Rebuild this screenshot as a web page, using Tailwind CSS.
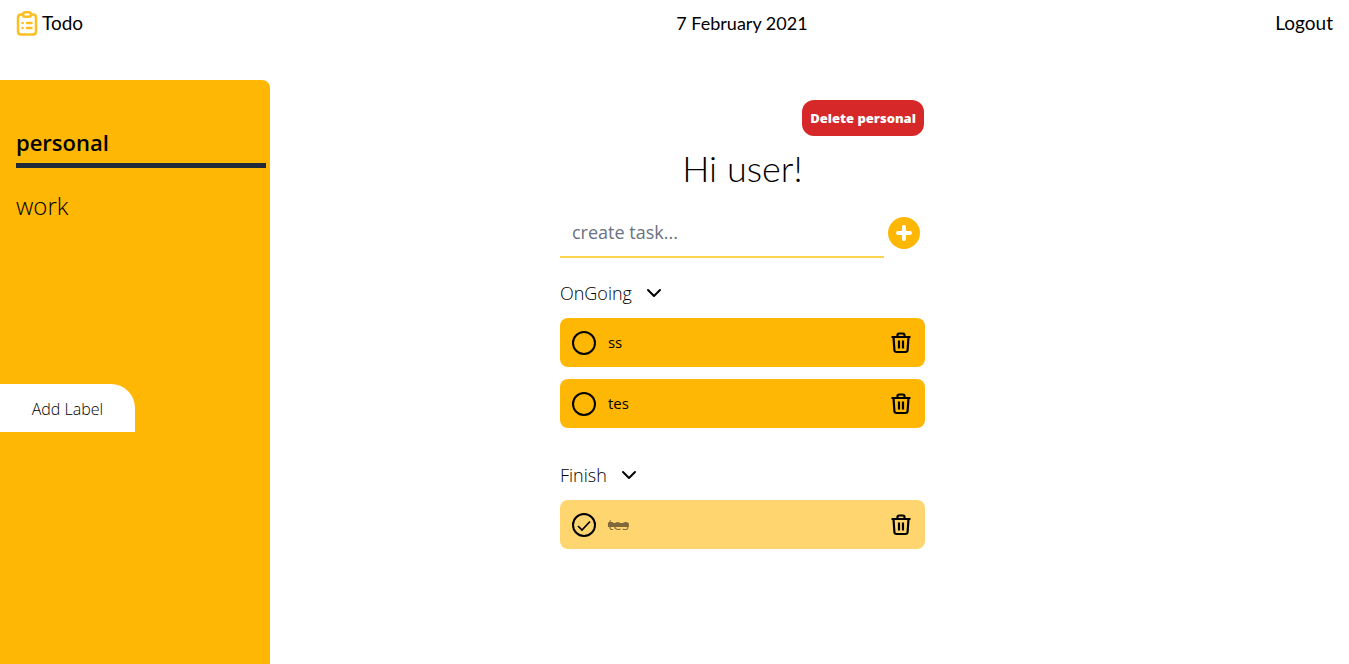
<!DOCTYPE html>
<html lang="en">
<head>
<meta charset="utf-8">
<meta name="viewport" content="width=device-width, initial-scale=1">
<title>Todo</title>
<script src="https://cdn.jsdelivr.net/npm/@tailwindcss/browser@4"></script>
</head>
<body class="flex min-h-screen flex-col bg-white font-['Open_Sans','Noto_Sans',sans-serif] text-black">
<svg class="hidden" aria-hidden="true">
  <symbol id="trash" viewBox="0 0 24 24"><path fill="none" stroke="currentColor" stroke-width="2.200" stroke-linejoin="round" d="M2.500 6h19M4.500 6l.9 13q.1 2 2.100 2h9q2 0 2.100-2L19.500 6M8.500 6V4q0-1.500 1.500-1.500h4q1.500 0 1.500 1.500v2M10 9.500v8M14 9.500v8"/></symbol>
  <symbol id="chevron" viewBox="0 0 16 16"><path fill="none" stroke="currentColor" stroke-width="2" stroke-linecap="round" stroke-linejoin="round" d="M2 5l6 6 6-6"/></symbol>
</svg>
<header class="grid h-12 grid-cols-[20%_70%_10%] items-center pb-0.5 font-['Lato',sans-serif] text-[19px]">
  <a href="#" class="flex items-center gap-1 pl-4">
    <svg class="h-7 w-[22px] text-[#fbbf24]" viewBox="0 0 22 28" fill="none" stroke="currentColor" stroke-width="2.500" stroke-linecap="round" stroke-linejoin="round" aria-hidden="true">
      <path d="M7 5.500H5Q2 5.500 2 8.500v14q0 3 3 3h12q3 0 3-3v-14q0-3-3-3h-2"/><rect x="7" y="3.200" width="8" height="4.600" rx="2.300"/><path d="M6.500 14h.1M6.500 19h.1M11 14h4.500M11 19h4.500"/>
    </svg>
    <span>Todo</span>
  </a>
  <time datetime="2021-02-07" class="text-center text-lg">7 February 2021</time>
  <a href="#" class="pr-4 text-right">Logout</a>
</header>
<div class="mt-8 grid flex-1 grid-cols-[20%_70%_10%]">
  <aside class="rounded-tr-lg bg-[#ffb705] pt-11">
    <nav class="flex flex-col gap-5 pr-1 pl-4 text-2xl">
      <a href="#" class="h-11 border-b-[5px] border-gray-800 text-[22px] leading-9 font-semibold">personal</a>
      <a href="#" class="leading-9 font-light">work</a>
    </nav>
    <button type="button" class="mt-40 h-12 w-1/2 rounded-tr-3xl bg-white pt-0.5 text-base font-light">Add Label</button>
  </aside>
  <main class="mx-auto w-full max-w-[366px] pt-5 pl-px">
    <div class="flex justify-end pr-px"><button type="button" class="h-9 rounded-xl bg-[#d62828] px-2 pt-0.5 text-[13px] font-extrabold text-white">Delete personal</button></div>
    <h1 class="mt-3 text-center font-['Lato',sans-serif] text-4xl leading-10 font-light">Hi user!</h1>
    <form class="mt-5 flex items-center gap-1 pr-[5px]">
      <input type="text" aria-label="Create task" placeholder="create task..." class="h-[50px] min-w-0 flex-1 border-b-2 border-[#fcd34d] px-3 text-lg outline-none placeholder:text-gray-500">
      <button type="button" aria-label="Add task" class="size-8 rounded-full bg-[#ffb705] text-white"><svg viewBox="0 0 32 32" fill="none" stroke="currentColor" stroke-width="4" stroke-linecap="round" aria-hidden="true"><path d="M16 10v12M10 16h12"/></svg></button>
    </form>
    <section class="mt-5">
      <button type="button" class="flex h-[30px] items-center gap-3.5 text-lg font-light">OnGoing <svg class="size-4"><use href="#chevron"/></svg></button>
      <ul class="mt-2.5 flex flex-col gap-3">
        <li class="flex h-[49px] items-center justify-between rounded-lg bg-[#ffb705] px-3">
          <label class="flex items-center gap-3 text-[15px]"><input type="checkbox" class="size-6 appearance-none rounded-full border-2 border-black">ss</label>
          <button type="button" aria-label="Delete ss"><svg class="size-6"><use href="#trash"/></svg></button>
        </li>
        <li class="flex h-[49px] items-center justify-between rounded-lg bg-[#ffb705] px-3">
          <label class="flex items-center gap-3 text-[15px]"><input type="checkbox" class="size-6 appearance-none rounded-full border-2 border-black">tes</label>
          <button type="button" aria-label="Delete tes"><svg class="size-6"><use href="#trash"/></svg></button>
        </li>
      </ul>
    </section>
    <section class="mt-8">
      <button type="button" class="flex h-[30px] items-center gap-3.5 text-lg font-light">Finish <svg class="size-4"><use href="#chevron"/></svg></button>
      <ul class="mt-2.5">
        <li class="flex h-[49px] items-center justify-between rounded-lg bg-[#ffd570] px-3">
          <label class="flex items-center gap-3 text-[15px]">
            <span class="relative size-6"><input type="checkbox" checked class="block size-6 appearance-none rounded-full border-2 border-black"><svg class="pointer-events-none absolute inset-0" viewBox="0 0 24 24" fill="none" stroke="currentColor" stroke-width="1.700" aria-hidden="true"><path d="M6 13l4 4 8-8.500"/></svg></span>
            <span class="text-black/50 line-through decoration-[#80683a] decoration-4">tes</span>
          </label>
          <button type="button" aria-label="Delete finished tes"><svg class="size-6"><use href="#trash"/></svg></button>
        </li>
      </ul>
    </section>
  </main>
</div>
</body>
</html>
